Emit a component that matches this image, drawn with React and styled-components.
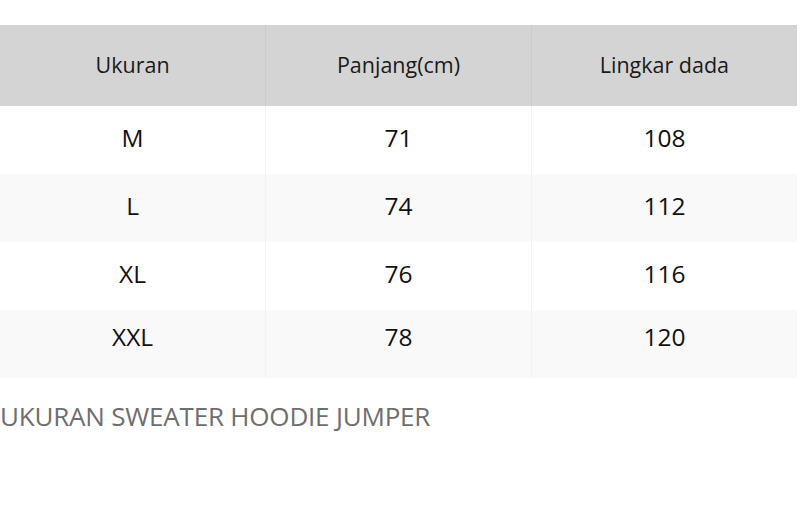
import React from 'react';
import styled, { createGlobalStyle } from 'styled-components';

const GlobalStyle = createGlobalStyle`
  body {
    margin: 0;
    background: #ffffff;
    font-family: "Open Sans", "Noto Sans", sans-serif;
  }
`;

const Page = styled.div`
  width: 800px;
  padding-top: 25px;
`;

const Table = styled.table`
  width: 797px;
  border-collapse: collapse;
  table-layout: fixed;
`;

const HeadCell = styled.th`
  height: 78px;
  padding: 0 0 3px;
  background: #d4d4d4;
  color: #1a1a1a;
  font-weight: 400;
  font-size: 21.5px;
  text-align: center;
  border-left: 1px solid #cbcbcb;
  &:first-child {
    border-left: none;
  }
`;

const Row = styled.tr`
  background: ${(p) => (p.$striped ? '#f9f9f9' : '#ffffff')};
`;

// last row sits its text a bit higher than the others
const Cell = styled.td`
  height: ${(p) => (p.$last ? 52 : 63)}px;
  padding: 0 0 ${(p) => (p.$last ? 16 : 5)}px;
  color: #111;
  font-size: 24.5px;
  text-align: center;
  border-left: 1px solid #f3f3f3;
  &:first-child {
    border-left: none;
  }
`;

const Caption = styled.div`
  margin-top: 20px;
  color: #6e6e6e;
  font-size: 26px;
  letter-spacing: -0.2px;
`;

const rows = [
  ['M', '71', '108'],
  ['L', '74', '112'],
  ['XL', '76', '116'],
  ['XXL', '78', '120'],
];

export default function App() {
  return (
    <Page>
      <GlobalStyle />
      <Table>
        <thead>
          <tr>
            <HeadCell>Ukuran</HeadCell>
            <HeadCell>Panjang(cm)</HeadCell>
            <HeadCell>Lingkar dada</HeadCell>
          </tr>
        </thead>
        <tbody>
          {rows.map((r, i) => (
            <Row key={r[0]} $striped={i % 2 === 1}>
              {r.map((v, j) => (
                <Cell key={j} $last={i === rows.length - 1}>{v}</Cell>
              ))}
            </Row>
          ))}
        </tbody>
      </Table>
      <Caption>UKURAN SWEATER HOODIE JUMPER</Caption>
    </Page>
  );
}
